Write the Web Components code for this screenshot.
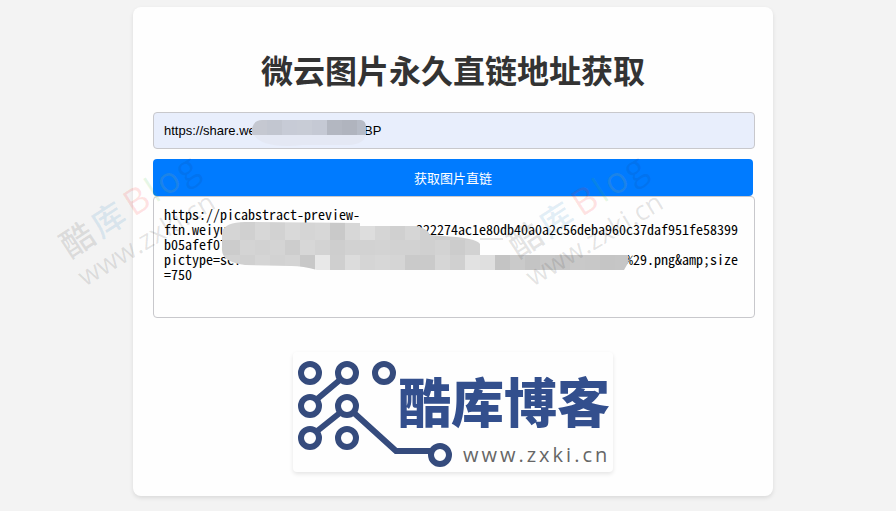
<!DOCTYPE html>
<html lang="zh-CN">
<head>
<meta charset="utf-8">
<meta name="viewport" content="width=device-width, initial-scale=1">
<title>微云图片永久直链地址获取</title>
<style>
    body {
        margin: 0;
        background-color: #f3f3f3;
        font-family: "Liberation Sans", "Noto Sans CJK SC", sans-serif;
    }
</style>
</head>
<body>
<link-page>
    <link-card heading="微云图片永久直链地址获取">
        <link-form></link-form>
        <site-logo></site-logo>
    </link-card>
</link-page>

<script>
class LinkPage extends HTMLElement {
    constructor() {
        super();

        this.attachShadow({ mode: 'open' });
        this.shadowRoot.innerHTML = /*html*/`
            <style>
            :host {
                display: block;
                position: relative;
                min-height: 100vh;
                box-sizing: border-box;
                padding: 7px 0 15px 10px;
                overflow: hidden;
            }

            /* watermarks float over the whole page */
            .marks {
                position: absolute;
                inset: 0;
                display: grid;
                grid-template-columns: 1fr 1fr;
                pointer-events: none;
            }
            </style>

            <slot></slot>
            <div class="marks">
                <water-mark></water-mark>
                <water-mark></water-mark>
            </div>
        `;
    }
}

class WaterMark extends HTMLElement {
    constructor() {
        super();

        this.attachShadow({ mode: 'open' });
        this.shadowRoot.innerHTML = /*html*/`
            <style>
            :host {
                display: block;
            }

            svg {
                display: block;
                margin: 100px 0 0 40px;
                overflow: visible;
            }

            .name {
                font: 500 33px "Noto Sans CJK SC", sans-serif;
            }

            .latin {
                font: 36px "Open Sans", sans-serif;
            }

            .site {
                font: 27px "Open Sans", sans-serif;
            }
            </style>

            <svg width="240" height="210" viewBox="0 -40 240 210" aria-hidden="true">
                <g fill-opacity="0.13">
                    <text class="name" transform="translate(30 119) rotate(-33)">
                        <tspan x="0" fill="#333333">酷</tspan><tspan x="37" fill="#2080c0">库</tspan><tspan class="latin" x="76" fill="#ff2020">B</tspan><tspan class="latin" x="102" fill="#40c040">l</tspan><tspan class="latin" x="114" fill="#e0c040">o</tspan><tspan class="latin" x="137" fill="#104080">g</tspan>
                    </text>
                    <text class="site" transform="translate(45 147) rotate(-31)" fill="#333333">www.zxki.cn</text>
                </g>
            </svg>
        `;
    }
}

class LinkCard extends HTMLElement {
    constructor() {
        super();

        this.attachShadow({ mode: 'open' });
        this.shadowRoot.innerHTML = /*html*/`
            <style>
            :host {
                display: block;
                box-sizing: border-box;
                max-width: 640px;
                margin: 0 auto;
                padding: 41px 20px 24px;
                background-color: #fefefe;
                border-radius: 8px;
                box-shadow: 0 2px 4px rgba(0, 0, 0, 0.1);
            }

            h1 {
                margin: 0 0 21px;
                font: bold 32px/43px "Noto Sans CJK SC", sans-serif;
                text-align: center;
                color: #333333;
            }
            </style>

            <h1></h1>
            <slot></slot>
        `;
        this.shadowRoot.querySelector('h1').textContent = this.getAttribute('heading');
    }
}

class LinkForm extends HTMLElement {
    constructor() {
        super();

        this.attachShadow({ mode: 'open' });
        this.shadowRoot.innerHTML = /*html*/`
            <style>
            :host {
                display: block;
            }

            form {
                display: flex;
                flex-direction: column;
            }

            .field {
                position: relative;
                display: flex;
                /* fields are 2px wider than the button */
                margin-right: -2px;
            }

            .address {
                margin-bottom: 10px;
            }

            input, textarea {
                box-sizing: border-box;
                width: 100%;
                margin: 0;
                padding: 10px;
                border: 1px solid #c8c8cc;
                border-radius: 4px;
                color: #000000;
                outline: none;
            }

            input {
                height: 37px;
                background-color: #e8eefc;
                font: 13px "Liberation Sans", sans-serif;
            }

            textarea {
                height: 122px;
                background-color: #fefefe;
                font: 14px/15px "Noto Sans Mono CJK SC", "Liberation Mono", monospace;
                resize: none;
                white-space: pre;
                overflow: hidden;
            }

            button {
                height: 37px;
                border: none;
                border-radius: 4px;
                background-color: #007bff;
                color: #ffffff;
                font: 13px "Noto Sans CJK SC", sans-serif;
                cursor: pointer;
            }

            svg {
                position: absolute;
                top: 0;
                left: 0;
                pointer-events: none;
            }
            </style>

            <form>
                <div class="field address">
                    <input type="text" aria-label="分享地址">
                    <svg class="hide-address" width="230" height="37" aria-hidden="true"></svg>
                </div>
                <button type="button">获取图片直链</button>
                <div class="field">
                    <textarea aria-label="图片直链" spellcheck="false" readonly></textarea>
                    <svg class="hide-result" width="490" height="90" aria-hidden="true"></svg>
                </div>
            </form>
        `;

        const gap = n => ' '.repeat(n);
        this.shadowRoot.querySelector('input').value = 'https://share.we' + gap(30) + 'BP';
        this.shadowRoot.querySelector('textarea').value = [
            'https://picabstract-preview-',
            'ftn.weiyun' + gap(26) + '222274ac1e80db40a0a2c56deba960c37daf951fe58399',
            'b05afef07',
            'pictype=sci' + gap(55) + '%29.png&amp;size',
            '=750'
        ].join('\n');

        this.pixelate('.hide-address', 99, 8, 15,
            'M99 16Q101 8 109 8H208Q213 9 213 15V23H99Z',
            [['c5c8d1', 'c2c6d0', 'c7cbd6', 'c8ccd6', 'c5c9d4', 'b3b7c1', 'b0b4be', 'b6bbc6']],
            '<path d="M101 23H213Q211 32 196 33H150Q110 37 101 23Z" fill="#e4e8f4"/>');
        this.pixelate('.hide-result', 57, 29, 15,
            'M69 36Q72 26 92 26L207 27V30H263Q274 32 277 39L303 41Q324 43 327 48V59H475V67L471 74H164Q150 70 138 70L92 69Q69 66 69 54Z',
            [
                ['d5d5d5', 'd5d5d5', 'd0d0d0', 'd7d7d7', 'd2d2d2', 'd9d9d9', 'd5d5d5', 'd7d7d7', 'c9c9c9', 'd7d7d7', 'dddddd', 'd5d5d5', 'd0d0d0', 'd6d6d6', 'cfcfcf', 'cccccc', 'd0d0d0', 'd0d0d0', 'd0d0d0'],
                ['cccccc', 'cccccc', 'd4d4d4', 'd2d2d2', 'd4d4d4', 'cdcdcd', 'd7d7d7', 'd3d3d3', 'cecece', 'd2d2d2', 'd2d2d2', 'd3d3d3', 'd2d2d2', 'd2d2d2', 'd0d0d0', 'd3d3d3', 'cccccc', 'd2d2d2', 'cecece'],
                ['d2d2d2', 'd2d2d2', 'd0d0d0', 'd5d5d5', 'd2d2d2', 'd4d4d4', 'c8c8c8', 'e8e8e8', 'cfcfcf', 'dcdcdc', 'd5d5d5', 'd7d7d7', 'd5d5d5', 'cacaca', 'cacaca', 'd6d6d6', 'd0d0d0', 'e2e2e2', 'dfdfdf', 'c4c4c4', 'cacaca', 'c4c4c4', 'c8c8c8', 'c6c6c6', 'c9c9c9', 'c8c8c8', 'c5c5c5', 'c6c6c6']
            ],
            '<path d="M327 43H350" stroke="#d0d0d0"/>');
    }

    // covers the private part of a link with rows of flat squares, cut to an outline
    pixelate(selector, left, top, size, outline, rows, extra) {
        const id = selector.slice(1);
        let cells = '';
        rows.forEach((row, y) => {
            row.forEach((color, x) => {
                // first row also fills the outline's overhang
                const up = y === 0 ? 4 : 0;
                cells += `<rect x="${left + x * size}" y="${top + y * size - up}" width="${size}" height="${size + up}" fill="#${color}"/>`;
            });
        });
        this.shadowRoot.querySelector(selector).innerHTML =
            `<clipPath id="${id}"><path d="${outline}"/></clipPath>${extra}<g clip-path="url(#${id})">${cells}</g>`;
    }
}

class SiteLogo extends HTMLElement {
    constructor() {
        super();

        this.attachShadow({ mode: 'open' });
        this.shadowRoot.innerHTML = /*html*/`
            <style>
            :host {
                display: flex;
                justify-content: center;
                margin-top: 34px;
            }

            svg {
                border-radius: 4px;
                background-color: #fefefe;
                box-shadow: 0 2px 4px rgba(0, 0, 0, 0.1);
            }

            .name {
                font: 900 53px "Noto Sans CJK SC", sans-serif;
                fill: #334f8d;
            }

            .site {
                font: 20px "Open Sans", sans-serif;
                letter-spacing: 3px;
                fill: #666666;
            }
            </style>

            <svg width="320" height="120" viewBox="0 0 320 120" role="img" aria-label="酷库博客">
                <g fill="none" stroke="#354b7d" stroke-width="6">
                    <path d="M23 48L48 27M23 80L48 60M60 60L103 99H139"/>
                    <g fill="#fefefe">
                        <circle cx="17" cy="21" r="9"/>
                        <circle cx="54" cy="21" r="9"/>
                        <circle cx="91" cy="21" r="9"/>
                        <circle cx="17" cy="54" r="9"/>
                        <circle cx="54" cy="54" r="9"/>
                        <circle cx="17" cy="86" r="9"/>
                        <circle cx="54" cy="86" r="9"/>
                        <circle cx="147" cy="103" r="9"/>
                    </g>
                </g>
                <text class="name" x="105" y="71">酷库博客</text>
                <text class="site" x="170" y="110">www.zxki.cn</text>
            </svg>
        `;
    }
}

window.customElements.define('link-page', LinkPage);
window.customElements.define('water-mark', WaterMark);
window.customElements.define('link-card', LinkCard);
window.customElements.define('link-form', LinkForm);
window.customElements.define('site-logo', SiteLogo);
</script>
</body>
</html>
